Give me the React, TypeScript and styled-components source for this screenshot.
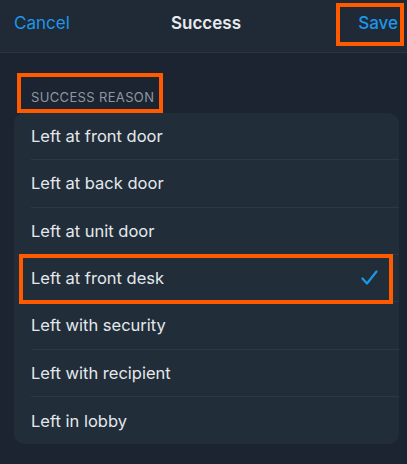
import React from "react";
import styled, { createGlobalStyle } from "styled-components";

const Global = createGlobalStyle`
  html, body { margin: 0; padding: 0; background: #1b2430; }
  * { box-sizing: border-box; }
`;

const Page = styled.div`
  width: 407px;
  height: 464px;
  background: #1b2430;
  font-family: Inter, "Noto Sans", sans-serif;
  overflow: hidden;
`;

const NavBar = styled.div`
  height: 53px;
  background: #1f2a36;
  border-bottom: 1px solid #2a3542;
  display: grid;
  grid-template-columns: 1fr auto 1fr;
  align-items: start;
  padding: 11px 9px 0 14px;
`;

const NavButton = styled.span<{ $align: "left" | "right" }>`
  position: relative;
  justify-self: ${(p) => (p.$align === "left" ? "start" : "end")};
  color: #1e96ea;
  font-size: 17px;
  line-height: 24px;
  font-weight: ${(p) => (p.$align === "right" ? 500 : 400)};
`;

const Title = styled.span`
  color: #e8ebee;
  font-size: 17px;
  line-height: 24px;
  font-weight: 600;
`;

const Highlight = styled.span<{ $t: number; $r: number; $b: number; $l: number }>`
  position: absolute;
  top: ${(p) => p.$t}px;
  right: ${(p) => p.$r}px;
  bottom: ${(p) => p.$b}px;
  left: ${(p) => p.$l}px;
  border: 4px solid #ff5a00;
  pointer-events: none;
  z-index: 2;
`;

const SectionHeader = styled.div`
  display: flex;
  align-items: flex-start;
  padding: 36px 31px 0;
  height: 60px;
`;

const HeaderLabel = styled.span`
  position: relative;
  color: #8d97a3;
  font-size: 13px;
  line-height: 16px;
  letter-spacing: 0.35px;
  text-transform: uppercase;
`;

const Card = styled.div`
  margin: 0 8px 0 14px;
  background: #212d39;
  border-radius: 10px;
  display: flex;
  flex-direction: column;
`;

const Row = styled.div`
  position: relative;
  height: 47.33px;
  padding-left: 17px;
  display: flex;
`;

const RowContent = styled.div<{ $last: boolean }>`
  flex: 1;
  display: flex;
  align-items: center;
  justify-content: space-between;
  padding-right: 21px;
  border-bottom: ${(p) => (p.$last ? "none" : "1px solid #2c3845")};
`;

const RowLabel = styled.span`
  color: #e4e8ec;
  font-size: 16.5px;
  line-height: 22px;
`;

const Check = () => (
  <svg width="17" height="16" viewBox="0 0 17 16" fill="none">
    <path
      d="M1.5 8.5 L6 13.5 L15.5 1.5"
      stroke="#1e96ea"
      strokeWidth="2.2"
      strokeLinecap="round"
      strokeLinejoin="round"
    />
  </svg>
);

const options = [
  "Left at front door",
  "Left at back door",
  "Left at unit door",
  "Left at front desk",
  "Left with security",
  "Left with recipient",
  "Left in lobby",
];

const selected = "Left at front desk";

export default function App() {
  return (
    <Page>
      <Global />
      <NavBar>
        <NavButton $align="left">Cancel</NavButton>
        <Title>Success</Title>
        <NavButton $align="right">
          Save
          <Highlight $t={-8} $r={-6} $b={-11} $l={-22} />
        </NavButton>
      </NavBar>
      <SectionHeader>
        <HeaderLabel>
          Success Reason
          <Highlight $t={-16} $r={-9} $b={-8} $l={-14} />
        </HeaderLabel>
      </SectionHeader>
      <Card>
        {options.map((o, i) => (
          <Row key={o}>
            <RowContent $last={i === options.length - 1}>
              <RowLabel>{o}</RowLabel>
              {o === selected && <Check />}
            </RowContent>
            {o === selected && <Highlight $t={-1} $r={6} $b={-2} $l={5} />}
          </Row>
        ))}
      </Card>
    </Page>
  );
}
